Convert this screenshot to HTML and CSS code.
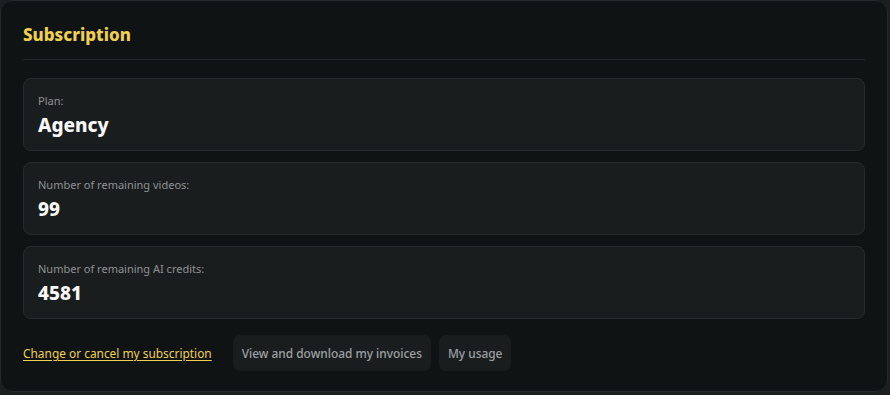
FILE: index.html
```html
<!DOCTYPE html>
<html lang="en">
<head>
    <meta charset="UTF-8">
    <meta name="viewport" content="width=device-width, initial-scale=1.0">
    <title>Subscription</title>
    <link rel="stylesheet" href="styles.css">
</head>
<body>
    <div class="panel">
        <h2 class="panelTitle">Subscription</h2>

        <div class="stats">
            <div class="stat">
                <p class="statLabel">Plan:</p>
                <p class="statValue">Agency</p>
            </div>
            <div class="stat">
                <p class="statLabel">Number of remaining videos:</p>
                <p class="statValue">99</p>
            </div>
            <div class="stat">
                <p class="statLabel">Number of remaining AI credits:</p>
                <p class="statValue">4581</p>
            </div>
        </div>

        <div class="actions">
            <a class="actionLink" href="#">Change or cancel my subscription</a>
            <button class="actionBtn" type="button">View and download my invoices</button>
            <button class="actionBtn" type="button">My usage</button>
        </div>
    </div>
</body>
</html>
```

FILE: styles.css
```css
body {
    margin: 0;
    background-color: #1c1f20;
    font-family: "Noto Sans", "Open Sans", sans-serif;
}

.panel {
    box-sizing: border-box;
    width: 888px;
    height: 392px;
    padding: 0 22px;
    background-color: #101314;
    border: 1px solid #26292b;
    border-radius: 12px;
}

.panelTitle {
    margin: 0;
    padding: 21px 0 12px;
    font-size: 17px;
    line-height: 25px;
    font-weight: 800;
    color: #efd050;
    border-bottom: 1px solid #23272a;
}

.stats {
    display: flex;
    flex-direction: column;
    gap: 11px;
    margin-top: 18px;
}

.stat {
    height: 73px;
    box-sizing: border-box;
    padding: 14px 14px 0;
    background-color: #1a1d1e;
    border: 1px solid #282b2d;
    border-radius: 8px;
}

.statLabel {
    margin: 0;
    font-size: 11px;
    line-height: 15px;
    color: #8e9294;
}

.statValue {
    margin: 4px 0 0;
    font-size: 19px;
    line-height: 26px;
    font-weight: 800;
    color: #f7f7f7;
}

.actions {
    display: flex;
    align-items: center;
    gap: 8px;
    margin-top: 16px;
}

.actionLink {
    margin-right: 13px;
    font-size: 11.9px;
    color: #efd050;
    text-decoration: underline;
    text-underline-offset: 2px;
}

.actionBtn {
    height: 36px;
    padding: 0 9px;
    font-family: inherit;
    font-size: 11.9px;
    font-weight: 500;
    color: #9da1a3;
    background-color: #1a1d1e;
    border: none;
    border-radius: 7px;
}
```
